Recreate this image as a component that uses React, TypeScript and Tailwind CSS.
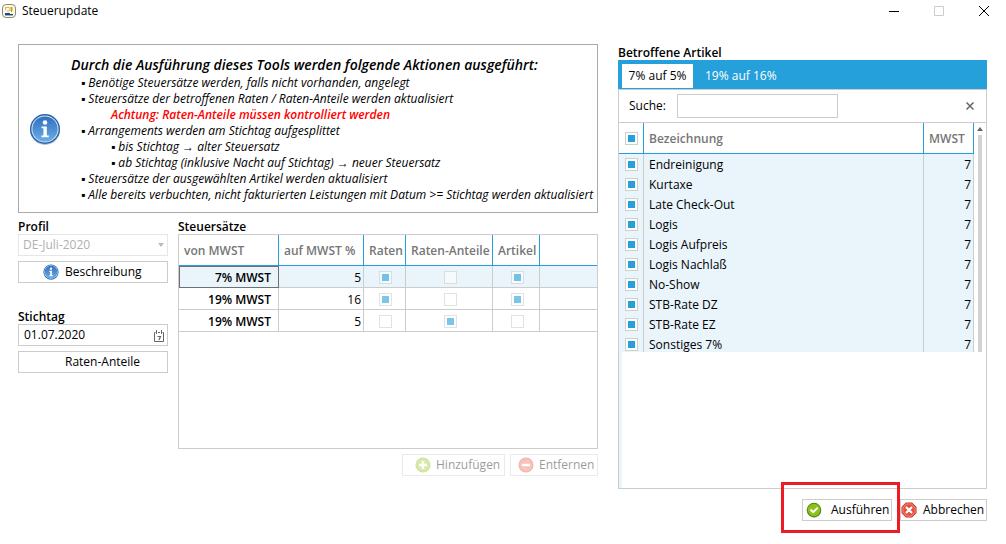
import { useState } from "react";

const rates = [
  { id: 1, from: "7% MWST", to: 5, raten: true, anteile: false, artikel: true },
  { id: 2, from: "19% MWST", to: 16, raten: true, anteile: false, artikel: true },
  { id: 3, from: "19% MWST", to: 5, raten: false, anteile: true, artikel: false },
];

const articles = [
  "Endreinigung",
  "Kurtaxe",
  "Late Check-Out",
  "Logis",
  "Logis Aufpreis",
  "Logis Nachlaß",
  "No-Show",
  "STB-Rate DZ",
  "STB-Rate EZ",
  "Sonstiges 7%",
];

const InfoIcon = ({ className }: { className: string }) => (
  <svg viewBox="0 0 32 32" className={className} aria-hidden="true">
    <defs>
      <linearGradient id="info" x1="0" y1="0" x2="0" y2="1">
        <stop offset="0" stopColor="#2f6fbd" />
        <stop offset="1" stopColor="#6aaee6" />
      </linearGradient>
    </defs>
    <circle cx="16" cy="17" r="15" fill="#b9bec6" />
    <circle cx="16" cy="16" r="15" fill="#2762ae" />
    <circle cx="16" cy="16" r="13.6" fill="#cfe3f6" />
    <circle cx="16" cy="16" r="12.6" fill="url(#info)" />
    <circle cx="16" cy="9.5" r="2.3" fill="#fff" />
    <path d="M12.5 13.5h5.3v9h2v1.8h-7.4v-1.8h2v-7.2h-1.9z" fill="#fff" />
  </svg>
);

const AppIcon = () => (
  <svg viewBox="0 0 16 16" className="h-4 w-4" aria-hidden="true">
    <rect x="1.5" y="1.5" width="13" height="13" rx="3.5" fill="#fbf8e6" stroke="#8d8b80" />
    <path d="M4 4h4v1H4zM4 5h1v2H4z" fill="#d8b85a" />
    <path d="M8 4h4v4H8z" fill="#f0d06a" />
    <path d="M10 4h1v5h-1z" fill="#c79a1c" />
    <path d="M6 7h2v2H6z" fill="#c9d5df" />
    <path d="M4 10h5v1h3v1H4z" fill="#1f4a80" />
    <path d="M4 12h8v1H4z" fill="#9fb3c8" />
  </svg>
);

const CalendarIcon = () => (
  <svg viewBox="0 0 12 13" className="h-[13px] w-3" fill="none" stroke="#666" aria-hidden="true">
    <path d="M2.500 3.500H1.500v9h9v-9h-1M5 3.500h2M3.500 1v4M8.500 1v4" />
    <path d="M4.500 7.500h3L6 11" strokeWidth="1.200" />
  </svg>
);

const PlusIcon = () => (
  <svg viewBox="0 0 16 16" className="h-4 w-4 shrink-0" aria-hidden="true">
    <circle cx="8" cy="8" r="7.5" fill="#86b81c" />
    <circle cx="8" cy="8" r="6.5" fill="#9ccb2e" />
    <path d="M8 4v8M4 8h8" stroke="#fff" strokeWidth="2.400" />
  </svg>
);

const MinusIcon = () => (
  <svg viewBox="0 0 16 16" className="h-4 w-4 shrink-0" aria-hidden="true">
    <circle cx="8" cy="8" r="7.5" fill="#d9432f" />
    <circle cx="8" cy="8" r="6.5" fill="#ee6a55" />
    <path d="M4 8h8" stroke="#fff" strokeWidth="2.400" />
  </svg>
);

const OkIcon = () => (
  <svg viewBox="0 0 16 16" className="h-4 w-4 shrink-0" aria-hidden="true">
    <circle cx="8" cy="8.500" r="7.2" fill="#9aa58a" />
    <circle cx="8" cy="8" r="7.2" fill="#4f8a10" />
    <circle cx="8" cy="8" r="6.2" fill="#8cc215" />
    <path d="M4.500 7.500l2.700 2.700 4.500-4.500" fill="none" stroke="#fff" strokeWidth="2" />
  </svg>
);

const CancelIcon = () => (
  <svg viewBox="0 0 16 16" className="h-4 w-4 shrink-0" aria-hidden="true">
    <path d="M5 .5h6L15.500 5v6L11 15.500H5L.5 11V5z" fill="#c92a1c" />
    <path d="M5.400 1.500h5.200l3.900 3.900v5.200l-3.900 3.900H5.400L1.500 10.600V5.400z" fill="#f3a497" />
    <path d="M5.700 2.300h4.600l3.400 3.400v4.600l-3.400 3.400H5.700l-3.400-3.400V5.700z" fill="#e4503c" />
    <path d="M5 5l6 6M11 5l-6 6" stroke="#fff" strokeWidth="2.200" />
  </svg>
);

type CheckProps = { label: string; defaultChecked: boolean; disabled?: boolean };

const Check = ({ label, defaultChecked, disabled }: CheckProps) => (
  <input
    type="checkbox"
    aria-label={label}
    defaultChecked={defaultChecked}
    disabled={disabled}
    className="block h-[13px] w-[13px] appearance-none border border-[#cfcfcf] bg-white shadow-[inset_0_0_0_2px_#fff] checked:bg-[#25a0da] disabled:opacity-60"
  />
);

const App = () => {
  const [tab, setTab] = useState(0);
  const [search, setSearch] = useState("");
  const [date, setDate] = useState("01.07.2020");

  const button =
    "flex h-[22px] items-center border border-[#ccc] bg-white text-[12px] whitespace-nowrap";
  const th = "border-r border-b border-[#25a0da] text-left font-semibold text-[#767676]";
  const td = "border-r border-b border-[#ccc]";

  return (
    <div className="min-h-screen bg-white font-['Open_Sans','Noto_Sans',sans-serif] text-[12px] leading-4 text-black">
      <header className="flex h-[22px] items-center pl-px">
        <AppIcon />
        <h1 className="ml-[5px] flex-1">Steuerupdate</h1>
        <button aria-label="Minimieren" className="flex h-5 w-[45px] items-center justify-center">
          <svg viewBox="0 0 10 10" className="h-[10px] w-[10px]" stroke="#000">
            <path d="M0 5.500h10" />
          </svg>
        </button>
        <button aria-label="Maximieren" className="flex h-5 w-[45px] items-center justify-center">
          <svg viewBox="0 0 10 10" className="h-[10px] w-[10px]" fill="none" stroke="#ccc">
            <path d="M.5.5h9v9h-9z" />
          </svg>
        </button>
        <button aria-label="Schließen" className="flex h-5 w-[45px] items-center justify-center">
          <svg viewBox="0 0 10 10" className="h-[10px] w-[10px]" stroke="#000">
            <path d="M0 0l10 10M10 0L0 10" />
          </svg>
        </button>
      </header>

      <main className="grid grid-cols-[minmax(0,1fr)_369px] gap-x-5 pt-[22px] pr-[19px] pl-[18px]">
        <div>
          <section className="flex items-center border border-[#aaa] pl-[10px] italic">
            <InfoIcon className="h-8 w-8 shrink-0" />
            <div className="ml-[10px] pt-[10px] pb-[9px] whitespace-nowrap">
              <h2 className="text-[14px] leading-5 font-semibold">
                Durch die Ausführung dieses Tools werden folgende Aktionen ausgeführt:
              </h2>
              <ul className="pl-[10px]">
                <li>▪ Benötige Steuersätze werden, falls nicht vorhanden, angelegt</li>
                <li>
                  ▪ Steuersätze der betroffenen Raten / Raten-Anteile werden aktualisiert
                  <p className="pl-[30px] font-semibold text-[#f00]">
                    Achtung: Raten-Anteile müssen kontrolliert werden
                  </p>
                </li>
                <li>
                  ▪ Arrangements werden am Stichtag aufgesplittet
                  <ul className="pl-[30px]">
                    <li>▪ bis Stichtag → alter Steuersatz</li>
                    <li>▪ ab Stichtag (inklusive Nacht auf Stichtag) → neuer Steuersatz</li>
                  </ul>
                </li>
                <li>▪ Steuersätze der ausgewählten Artikel werden aktualisiert</li>
                <li>▪ Alle bereits verbuchten, nicht fakturierten Leistungen mit Datum &gt;= Stichtag werden aktualisiert</li>
              </ul>
            </div>
          </section>

          <div className="mt-[7px] flex gap-[10px]">
            <div className="w-[150px]">
              <label htmlFor="profil" className="block leading-[14px] font-semibold">
                Profil
              </label>
              <div className="relative">
                <select
                  id="profil"
                  disabled
                  className="block h-[22px] w-full appearance-none border border-[#e6e6e6] bg-white px-1 text-[#b0b0b0] opacity-100"
                >
                  <option>DE-Juli-2020</option>
                </select>
                <svg viewBox="0 0 6 4" className="absolute top-[9px] right-1 h-1 w-[6px]" fill="#bbb">
                  <path d="M0 0h6L3 4z" />
                </svg>
              </div>
              <button className={`${button} mt-[5px] w-full pl-6`}>
                <InfoIcon className="mr-[6px] h-4 w-4" />
                Beschreibung
              </button>

              <label htmlFor="stichtag" className="mt-[27px] block leading-[14px] font-semibold">
                Stichtag
              </label>
              <div className="flex h-[22px] items-center border border-[#ccc] pr-[2px]">
                <input
                  id="stichtag"
                  value={date}
                  onChange={(e) => setDate(e.target.value)}
                  className="min-w-0 flex-1 pl-[5px] outline-none"
                />
                <button aria-label="Kalender">
                  <CalendarIcon />
                </button>
              </div>
              <button className={`${button} mt-[5px] w-full pl-[46px]`}>Raten-Anteile</button>
            </div>

            <div className="min-w-0 flex-1">
              <h2 className="leading-[14px] font-semibold">Steuersätze</h2>
              <div className="h-[215px] border border-[#ccc]">
                <table className="w-full table-fixed border-separate border-spacing-0">
                  <colgroup>
                    <col className="w-[100px]" />
                    <col className="w-[85px]" />
                    <col className="w-[42px]" />
                    <col className="w-[87px]" />
                    <col className="w-[47px]" />
                    <col />
                  </colgroup>
                  <thead>
                    <tr className="h-[31px] whitespace-nowrap">
                      <th className={`${th} pt-[2px] pl-[5px]`}>von MWST</th>
                      <th className={`${th} pt-[2px] pl-[5px]`}>auf MWST %</th>
                      <th className={`${th} pt-[2px] pl-[5px]`}>Raten</th>
                      <th className={`${th} pt-[2px] pl-[5px]`}>Raten-Anteile</th>
                      <th className={`${th} pt-[2px] pl-[5px]`}>Artikel</th>
                      <th className="border-b border-[#25a0da]" />
                    </tr>
                  </thead>
                  <tbody>
                    {rates.map((rate) => (
                      <tr key={rate.id} className="h-[22px] first:bg-[#e9f4fb]">
                        <td
                          className={`${td} pt-[2px] pr-[7px] text-right font-semibold ${
                            rate.id === 1 ? "outline -outline-offset-1 outline-[#707070]" : ""
                          }`}
                        >
                          {rate.from}
                        </td>
                        <td className={`${td} pt-[2px] pr-[2px] text-right`}>{rate.to}</td>
                        <td className={`${td} pt-[2px] pl-[15px]`}>
                          <Check label="Raten" defaultChecked={rate.raten} disabled />
                        </td>
                        <td className={`${td} pt-[2px] pl-[38px]`}>
                          <Check label="Raten-Anteile" defaultChecked={rate.anteile} disabled />
                        </td>
                        <td className={`${td} pt-[2px] pl-[18px]`}>
                          <Check label="Artikel" defaultChecked={rate.artikel} disabled />
                        </td>
                        <td className="border-b border-[#ccc]" />
                      </tr>
                    ))}
                  </tbody>
                </table>
              </div>
              <div className="mt-[5px] flex justify-end gap-[5px]">
                <button disabled className={`${button} w-[103px] pl-3 opacity-40`}>
                  <PlusIcon />
                  <span className="ml-[5px]">Hinzufügen</span>
                </button>
                <button disabled className={`${button} w-[88px] pl-[7px] opacity-40`}>
                  <MinusIcon />
                  <span className="ml-[5px]">Entfernen</span>
                </button>
              </div>
            </div>
          </div>
        </div>

        <div>
          <h2 className="pt-[2px] leading-[14px] font-semibold">Betroffene Artikel</h2>
          <div className="flex h-[29px] items-end bg-[#25a0da] px-1 pb-px" role="tablist">
            {["7% auf 5%", "19% auf 16%"].map((name, i) => (
              <button
                key={name}
                role="tab"
                aria-selected={tab === i}
                onClick={() => setTab(i)}
                className={
                  tab === i
                    ? "h-6 w-[71px] bg-white text-black"
                    : "h-6 px-3 text-white"
                }
              >
                {name}
              </button>
            ))}
          </div>
          <div className="flex h-[400px] flex-col border border-[#ccc]">
            <div className="flex h-[33px] shrink-0 items-center border-b border-[#ccc] pr-3 pl-[10px]">
              <label htmlFor="suche" className="w-12">
                Suche:
              </label>
              <input
                id="suche"
                value={search}
                onChange={(e) => setSearch(e.target.value)}
                className="h-6 w-[161px] border border-[#ccc] px-1 outline-none"
              />
              <button aria-label="Suche löschen" className="ml-auto" onClick={() => setSearch("")}>
                <svg viewBox="0 0 8 8" className="h-2 w-2" stroke="#666" strokeWidth="1.500">
                  <path d="M.5.5l7 7M7.500.5l-7 7" />
                </svg>
              </button>
            </div>
            <div className="flex h-[229px] shrink-0 overflow-hidden">
              <table className="h-max flex-1 table-fixed border-separate border-spacing-0">
                <colgroup>
                  <col className="w-[25px]" />
                  <col />
                  <col className="w-[50px]" />
                </colgroup>
                <thead>
                  <tr className="h-[31px]">
                    <th className={`${th} pl-[6px]`}>
                      <Check label="Alle" defaultChecked />
                    </th>
                    <th className={`${th} pt-[2px] pl-[5px]`}>Bezeichnung</th>
                    <th className={`${th} pt-[2px] pl-[5px]`}>MWST</th>
                  </tr>
                </thead>
                <tbody className="bg-[#e9f4fb] leading-[14px]">
                  {articles.map((article) => (
                    <tr key={article} className="h-5">
                      <td className="border-r border-[#ccc] pl-[6px]">
                        <Check label={article} defaultChecked />
                      </td>
                      <td className="border-r border-[#ccc] pt-px pl-[5px]">{article}</td>
                      <td className="border-r border-[#ccc] pt-px pr-[2px] text-right">7</td>
                    </tr>
                  ))}
                </tbody>
              </table>
              <div className="flex w-3 flex-col items-center pt-1">
                <svg viewBox="0 0 6 4" className="h-1 w-[6px]" fill="#666">
                  <path d="M0 4h6L3 0z" />
                </svg>
                <div className="mt-1 w-1 flex-1 bg-[#d2d2d2]" />
              </div>
            </div>
            <div className="w-[3px] flex-1 bg-[#e9f4fb]" />
          </div>
          <div className="mt-[10px] flex justify-end gap-2">
            <div className="relative">
              <button className={`${button} w-[90px] pl-[3px]`}>
                <OkIcon />
                <span className="ml-[9px]">Ausführen</span>
              </button>
              <div className="pointer-events-none absolute -top-[17px] -right-2 -bottom-3 -left-[21px] border-3 border-[#ed1c24]" />
            </div>
            <button className={`${button} w-[87px]`}>
              <CancelIcon />
              <span className="ml-[6px]">Abbrechen</span>
            </button>
          </div>
        </div>
      </main>
    </div>
  );
};

export default App;
